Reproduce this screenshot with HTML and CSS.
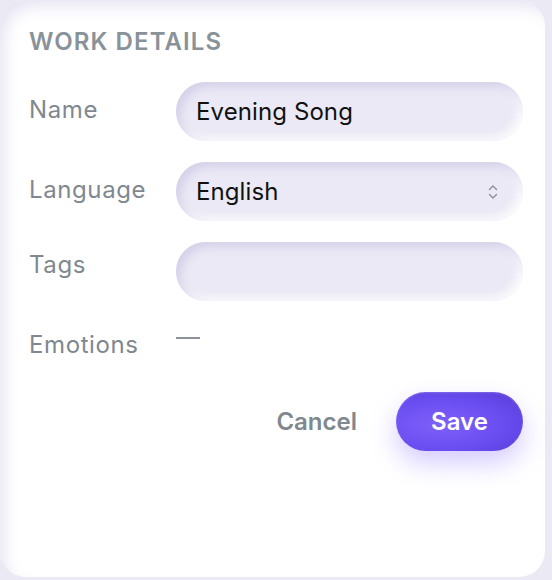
FILE: index.html
```html
<!DOCTYPE html>
<html lang="en">
<head>
<meta charset="utf-8">
<title>Work details</title>
<link rel="stylesheet" href="styles.css">
</head>
<body>
<section class="card">
  <h2 class="title">Work Details</h2>
  <div class="form">
    <div class="label">Name</div>
    <div class="field"><span class="value">Evening Song</span></div>

    <div class="label">Language</div>
    <div class="field select">
      <span class="value">English</span>
      <svg class="chev" width="10" height="16" viewBox="0 0 10 16" aria-hidden="true">
        <path d="M1.5 5.5 L5 2 L8.5 5.5" fill="none" stroke="#8b9299" stroke-width="1.4" stroke-linecap="round" stroke-linejoin="round"/>
        <path d="M1.5 10.5 L5 14 L8.5 10.5" fill="none" stroke="#8b9299" stroke-width="1.4" stroke-linecap="round" stroke-linejoin="round"/>
      </svg>
    </div>

    <div class="label label-tight">Tags</div>
    <div class="field"></div>

    <div class="label label-tight">Emotions</div>
    <div class="empty"><span class="dash"></span></div>
  </div>
  <div class="actions">
    <button class="btn-cancel" type="button">Cancel</button>
    <button class="btn-save" type="button">Save</button>
  </div>
</section>
</body>
</html>
```
FILE: styles.css
```css
html, body {
  margin: 0;
  padding: 0;
}
body {
  background: #ebe9f4;
  width: 552px;
  height: 580px;
  overflow: hidden;
  font-family: Inter, "Noto Sans", "Liberation Sans", sans-serif;
}
.card {
  box-sizing: border-box;
  width: 545px;
  height: 577px;
  background: #ffffff;
  border-radius: 26px;
  padding: 27px 22px 0 29px;
  box-shadow: inset 8px 10px 16px -4px rgba(226, 224, 240, 0.9);
}
.title {
  margin: 0;
  font-size: 24px;
  line-height: 30px;
  font-weight: 600;
  letter-spacing: 1.1px;
  text-transform: uppercase;
  color: #8a9299;
}
.form {
  margin-top: 25px;
  display: grid;
  grid-template-columns: 147px 1fr;
  row-gap: 21px;
}
.label {
  padding-top: 13px;
  font-size: 24px;
  line-height: 29px;
  letter-spacing: 0.6px;
  color: #7f888f;
}
.label-tight {
  padding-top: 8px;
}
.field {
  height: 59px;
  border-radius: 30px;
  background: #ebe9f5;
  box-shadow: inset 5px 5px 9px rgba(205, 201, 228, 0.75), inset -4px -4px 8px rgba(255, 255, 255, 0.85);
  display: flex;
  align-items: center;
  padding: 0 20px;
}
.select {
  justify-content: space-between;
  padding-right: 25px;
}
.value {
  font-size: 24px;
  color: #111111;
  letter-spacing: 0.1px;
}
.chev {
  display: block;
}
.empty {
  padding-top: 15px;
}
.dash {
  display: block;
  width: 24px;
  height: 2px;
  background: #8b9299;
}
.actions {
  margin-top: 33px;
  display: flex;
  justify-content: flex-end;
  align-items: center;
  gap: 39px;
}
.btn-cancel {
  border: 0;
  background: none;
  padding: 0;
  font-family: inherit;
  font-size: 24px;
  font-weight: 600;
  color: #7f888f;
}
.btn-save {
  width: 127px;
  height: 59px;
  border: 0;
  border-radius: 30px;
  font-family: inherit;
  font-size: 24px;
  font-weight: 600;
  color: #ffffff;
  background: radial-gradient(ellipse at 35% 55%, #7e60fa 0%, #6a4df0 55%, #5639d4 100%);
  box-shadow: 0 12px 26px rgba(124, 92, 255, 0.32), inset 0 1px 2px rgba(255, 255, 255, 0.2);
}
```
